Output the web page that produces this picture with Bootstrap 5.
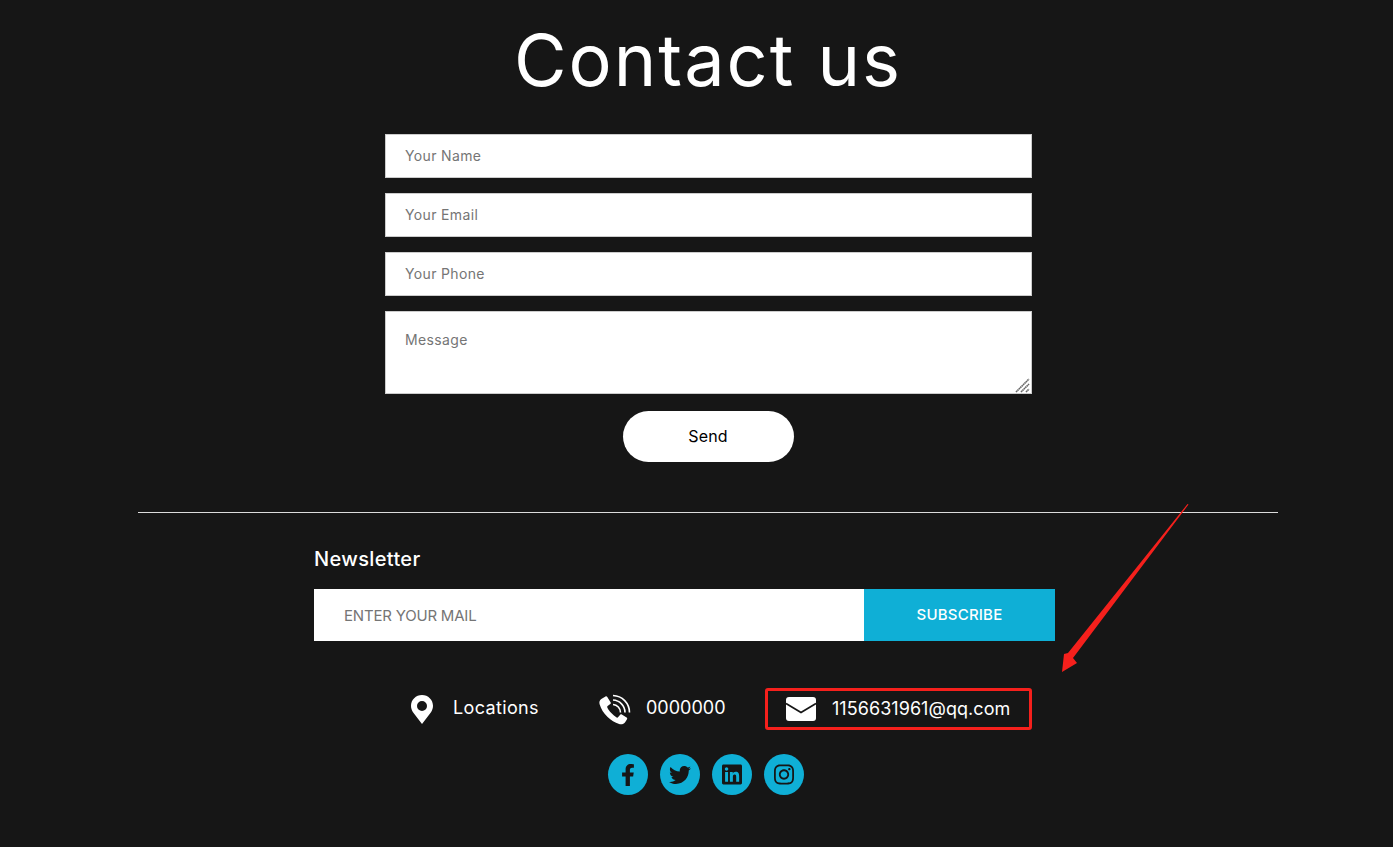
<!DOCTYPE html>
<html lang="en">
<head>
<meta charset="utf-8">
<title>Contact us</title>
<link href="https://cdn.jsdelivr.net/npm/bootstrap@5.3.0/dist/css/bootstrap.min.css" rel="stylesheet">
<style>
html,body{height:847px;overflow:hidden}
body{background:#161616;color:#fff;font-family:"Inter","Noto Sans",sans-serif;position:relative}
.page-wrap{width:1140px;margin-left:138px}
.contact-title{font-size:72px;font-weight:400;line-height:84px;text-align:center;margin:18px 0 32px;letter-spacing:2px}
.contact-form{width:647px;margin-left:247px}
.contact-form .form-control{height:44px;border-radius:0;font-size:14px;letter-spacing:.35px;padding:0 19px 2px;border:1px solid #ccc;margin-bottom:15px;color:#333}
.message-wrap{margin-bottom:17px}
.contact-form textarea.form-control{height:83px;padding-top:19px;margin-bottom:0;line-height:18px;resize:none}
.contact-form .form-control::placeholder,.news-input::placeholder{color:#757575;opacity:1}
.grip-mark{position:absolute;right:1px;bottom:1px;pointer-events:none}
.send-btn{width:171px;height:51px;border-radius:26px;background:#fff;color:#000;font-size:16px;letter-spacing:.15px;border:0;display:block;margin-left:238px;padding:0 1px 2px 0}
.foot-rule{border:0;border-top:1px solid #fff;opacity:.85;margin:50px 0 0}
.news-wrap{margin-left:176px;width:741px}
.news-title{font-size:20px;font-weight:500;letter-spacing:.35px;line-height:24px;margin:34px 0 18px}
.news-input{width:550px;height:52px;border:0;border-radius:0;padding:0 30px;font-size:15px;letter-spacing:-.2px;background:#fff}
.news-btn{width:191px;height:52px;background:#0fafd6;color:#fff;border:0;border-radius:0;font-weight:500;font-size:15px;letter-spacing:.2px;padding:0}
.info-row{height:42px;margin:47px 0 0 273px;font-size:18px}
.info-item{display:flex;align-items:center;height:42px}
.info-loc{width:188px}
.info-tel{width:166px}
.info-mail{width:267px;border:3px solid #f5201c;border-radius:3px;padding-left:18px}
.info-label{padding-bottom:4px;letter-spacing:.35px}
.info-tel .info-label{letter-spacing:0}
.info-mail .info-label{padding-bottom:2px;letter-spacing:.05px}
.social-row{margin:24px 0 0 470px;gap:12px}
.social-dot{width:40px;height:41px;border-radius:50%;background:#0fafd6;display:flex;align-items:center;justify-content:center}
.red-arrow{position:absolute;left:1055px;top:498px}
</style>
</head>
<body>
<div class="page-wrap">
  <h1 class="contact-title">Contact us</h1>
  <form class="contact-form">
    <input class="form-control" type="text" placeholder="Your Name">
    <input class="form-control" type="email" placeholder="Your Email">
    <input class="form-control" type="tel" placeholder="Your Phone">
    <div class="position-relative message-wrap">
      <textarea class="form-control" placeholder="Message"></textarea>
      <svg class="grip-mark" width="16" height="16" viewBox="0 0 16 16"><g stroke="#666" stroke-width="1.600" stroke-dasharray="1.600 .4"><path d="M1 15 14 2"/><path d="M6 15 14 7"/><path d="M11 15 14 12"/></g></svg>
    </div>
    <button type="button" class="btn send-btn">Send</button>
  </form>
  <hr class="foot-rule">
  <div class="news-wrap">
    <div class="news-title">Newsletter</div>
    <div class="d-flex">
      <input class="news-input" type="text" placeholder="ENTER YOUR MAIL">
      <button type="button" class="btn news-btn">SUBSCRIBE</button>
    </div>
  </div>
  <div class="d-flex info-row">
    <div class="info-item info-loc">
      <svg width="22" height="29" viewBox="0 0 22 29"><path fill="#fff" fill-rule="evenodd" d="M11 0C4.900 0 0 4.900 0 10.800c0 2.400.7 4.400 2 6.400L11 29l9-11.800c1.300-2 2-4 2-6.400C22 4.900 17.100 0 11 0zm0 6a5 5 0 1 1 0 10 5 5 0 0 1 0-10z"/></svg>
      <span class="info-label" style="margin-left:20px">Locations</span>
    </div>
    <div class="info-item info-tel">
      <svg width="32" height="31" viewBox="0 0 32 31"><path fill="#fff" d="M6.500 2.500 2.300 5C.6 6.200 0 8 .6 10.300c1.300 4.500 4 9 8 12.800 3.400 3.300 7.300 5.700 11.500 6.900 2.500.7 5-.2 6.200-2.100l1.700-2.700c.4-.6.200-1.300-.4-1.700l-4.800-3c-.6-.3-1.200-.2-1.600.3l-2.200 2.500c-.3.400-.9.500-1.300.2-1.900-1-3.700-2.500-5.400-4.400-1.700-1.800-3.200-3.900-4-5.700-.2-.5-.1-1 .3-1.300l2.700-2c.5-.4.700-1 .4-1.600L8.300 2.900c-.4-.6-1.200-.8-1.800-.4z"/><g fill="none" stroke="#fff" stroke-width="1.600"><path d="M14 10.500a8 8 0 0 1 7.500 8"/><path d="M14 6a12.500 12.500 0 0 1 12 12.500"/><path d="M14 1.500a17 17 0 0 1 16.500 17"/></g></svg>
      <span class="info-label" style="margin-left:15px">0000000</span>
    </div>
    <div class="info-item info-mail">
      <svg width="30" height="24" viewBox="0 0 30 24"><rect width="30" height="24" rx="3" fill="#fff"/><path d="M0 6.500 15 15.500 30 6.500" fill="none" stroke="#161616" stroke-width="1.800"/></svg>
      <span class="info-label" style="margin-left:16px">1156631961@qq.com</span>
    </div>
  </div>
  <div class="d-flex social-row">
    <div class="social-dot"><svg width="14" height="22" viewBox="0 0 320 512"><path fill="#161616" d="M279.14 288l14.22-92.66h-88.91v-60.13c0-25.35 12.42-50.06 52.24-50.06h40.42V6.260S260.430 0 225.360 0c-73.220 0-121.080 44.380-121.080 124.720v70.620H22.890V288h81.390v224h100.170V288z"/></svg></div>
    <div class="social-dot"><svg width="22" height="22" viewBox="0 0 512 512"><path fill="#161616" d="M459.37 151.716c.325 4.548.325 9.097.325 13.645 0 138.72-105.583 298.558-298.558 298.558-59.452 0-114.68-17.219-161.137-47.106 8.447.974 16.568 1.299 25.34 1.299 49.055 0 94.213-16.568 130.274-44.832-46.132-.975-84.792-31.188-98.112-72.772 6.498.974 12.995 1.624 19.818 1.624 9.421 0 18.843-1.3 27.614-3.573-48.081-9.747-84.143-51.98-84.143-102.985v-1.299c13.969 7.797 30.214 12.67 47.431 13.319-28.264-18.843-46.781-51.005-46.781-87.391 0-19.492 5.197-37.36 14.294-52.954 51.655 63.675 129.3 105.258 216.365 109.807-1.624-7.797-2.599-15.918-2.599-24.04 0-57.828 46.782-104.934 104.934-104.934 30.213 0 57.502 12.67 76.67 33.137 23.715-4.548 46.456-13.32 66.599-25.34-7.798 24.366-24.366 44.833-46.132 57.827 21.117-2.273 41.584-8.122 60.426-16.243-14.292 20.791-32.161 39.308-52.628 54.253z"/></svg></div>
    <div class="social-dot"><svg width="20" height="23" viewBox="0 0 448 512"><path fill="#161616" d="M416 32H31.900C14.300 32 0 46.500 0 64.300v383.400C0 465.500 14.300 480 31.900 480H416c17.600 0 32-14.500 32-32.300V64.300c0-17.800-14.400-32.300-32-32.300zM135.400 416H69V202.200h66.500V416zm-33.200-243c-21.300 0-38.500-17.300-38.500-38.500S80.900 96 102.200 96c21.200 0 38.500 17.300 38.500 38.500 0 21.300-17.200 38.500-38.500 38.500zm282.100 243h-66.400V312c0-24.800-.5-56.700-34.500-56.700-34.600 0-39.900 27-39.900 54.900V416h-66.400V202.200h63.700v29.200h.9c8.900-16.800 30.600-34.500 62.900-34.500 67.200 0 79.700 44.300 79.700 101.900V416z"/></svg></div>
    <div class="social-dot"><svg width="20" height="23" viewBox="0 0 448 512"><path fill="#161616" d="M224.100 141c-63.600 0-114.900 51.300-114.900 114.900s51.300 114.900 114.900 114.900S339 319.500 339 255.900 287.700 141 224.100 141zm0 189.600c-41.100 0-74.700-33.500-74.700-74.700s33.500-74.700 74.700-74.700 74.700 33.500 74.700 74.700-33.600 74.700-74.700 74.700zm146.400-194.300c0 14.900-12 26.800-26.800 26.800-14.900 0-26.800-12-26.800-26.800s12-26.800 26.800-26.800 26.800 12 26.800 26.800zm76.100 27.200c-1.700-35.900-9.900-67.700-36.200-93.900-26.200-26.200-58-34.400-93.900-36.200-37-2.100-147.900-2.100-184.900 0-35.800 1.700-67.600 9.900-93.900 36.100s-34.400 58-36.200 93.900c-2.100 37-2.100 147.900 0 184.900 1.700 35.900 9.900 67.700 36.200 93.900s58 34.400 93.900 36.200c37 2.100 147.900 2.100 184.900 0 35.900-1.700 67.700-9.900 93.900-36.200 26.200-26.200 34.400-58 36.200-93.900 2.100-37 2.100-147.800 0-184.800zM398.800 388c-7.800 19.600-22.900 34.700-42.600 42.600-29.500 11.700-99.500 9-132.100 9s-102.700 2.600-132.100-9c-19.600-7.800-34.700-22.900-42.600-42.600-11.700-29.500-9-99.500-9-132.100s-2.600-102.700 9-132.100c7.800-19.600 22.900-34.700 42.600-42.600 29.500-11.700 99.500-9 132.100-9s102.700-2.600 132.100 9c19.600 7.800 34.700 22.900 42.600 42.600 11.700 29.500 9 99.500 9 132.100s2.700 102.700-9 132.100z"/></svg></div>
  </div>
</div>
<svg class="red-arrow" width="140" height="180" viewBox="0 0 140 180"><path fill="#f5201c" d="M132.500 6 133.500 6.500 18 160 22 165 7 174 9 156 13 155z"/></svg>
<script src="https://cdn.jsdelivr.net/npm/bootstrap@5.3.0/dist/js/bootstrap.bundle.min.js"></script>
</body>
</html>
